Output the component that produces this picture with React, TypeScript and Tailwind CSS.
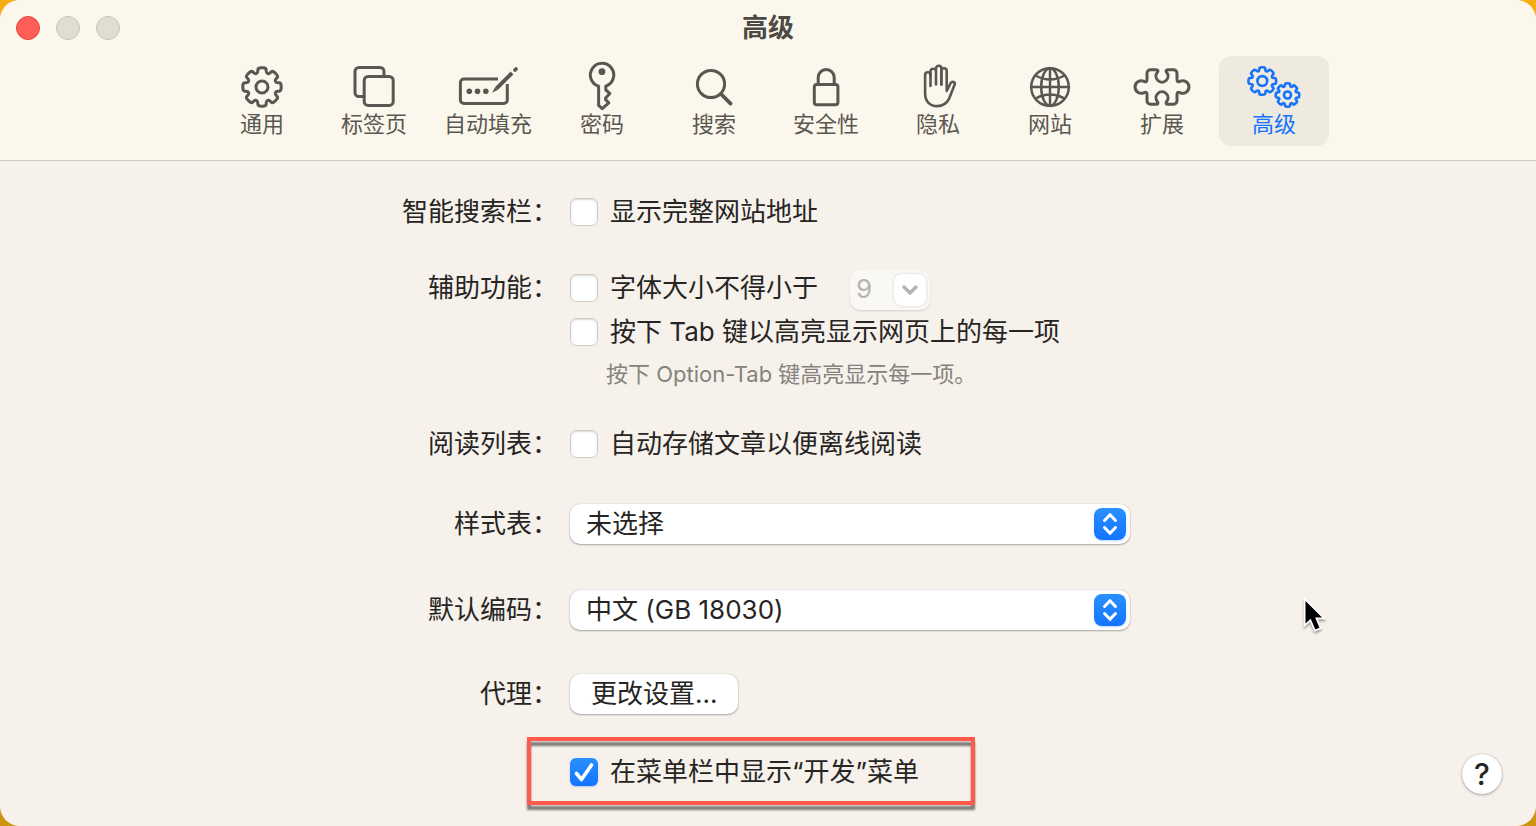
import React, { useState } from "react";
import { ChevronDown } from "lucide-react";

// Closed outline of a cog with eight rounded teeth
function gearPath(cx: number, cy: number, r: number) {
    const pts: number[][] = [];
    for (let i = 0; i < 8; i++) {
        const a = i * 45 - 90;
        [[-17, 0.75], [-12, 1], [12, 1], [17, 0.75]].forEach(([d, k]) => {
            const t = ((a + d) * Math.PI) / 180;
            pts.push([cx + Math.cos(t) * r * k, cy + Math.sin(t) * r * k]);
        });
    }
    const mix = (p: number[], q: number[], k: number) =>
        `${(p[0] + (q[0] - p[0]) * k).toFixed(2)} ${(p[1] + (q[1] - p[1]) * k).toFixed(2)}`;
    return (
        pts
            .map((p, i) => {
                const prev = pts[(i + pts.length - 1) % pts.length];
                const next = pts[(i + 1) % pts.length];
                return `${i === 0 ? "M" : "L"}${mix(p, prev, 0.4)} Q${mix(p, p, 0)} ${mix(p, next, 0.4)}`;
            })
            .join(" ") + "Z"
    );
}

const tabs: { label: string; icon: React.ReactNode }[] = [
    {
        label: "通用",
        icon: (
            <>
                <path d={gearPath(30, 25, 19.6)} />
                <circle cx="30" cy="25" r="6" />
            </>
        ),
    },
    {
        label: "标签页",
        icon: (
            <>
                <path d="M20 34.5H15a4 4 0 0 1-4-4V9.5a4 4 0 0 1 4-4h21a4 4 0 0 1 4 4V14" />
                <rect x="20.2" y="14.4" width="29" height="29" rx="4" />
            </>
        ),
    },
    {
        label: "自动填充",
        icon: (
            <>
                <path d="M40 17H6a3.6 3.6 0 0 0-3.6 3.6V38A3.6 3.6 0 0 0 6 41.6h39.7a3.6 3.6 0 0 0 3.6-3.6V22" strokeLinecap="butt" />
                <path d="M38.6 26.4L54 11" strokeWidth="4" strokeLinecap="butt" />
                <path d="M57 8l1-1" strokeWidth="3.8" />
                <g fill="currentColor" stroke="none">
                    <path d="M34.2 30.8l3-5.8 2.8 2.8z" />
                    <circle cx="11.3" cy="29.2" r="2.8" />
                    <circle cx="19.5" cy="29.2" r="2.8" />
                    <circle cx="27.8" cy="29.2" r="2.8" />
                </g>
            </>
        ),
    },
    {
        label: "密码",
        icon: (
            <>
                <path d="M26.6 24.2a11.7 11.7 0 1 1 7.2-.1V28l4 3.4-4.2 4.6v1.6l3.2 3.2-6.6 5.9-3.6-3.3z" />
                <circle cx="30" cy="9.7" r="3.4" fill="currentColor" stroke="none" />
            </>
        ),
    },
    {
        label: "搜索",
        icon: (
            <>
                <circle cx="27" cy="22" r="13.6" />
                <path d="M37 32l9.6 9.6" strokeWidth="3.8" />
            </>
        ),
    },
    {
        label: "安全性",
        icon: (
            <>
                <rect x="18.3" y="22.6" width="23.6" height="20.2" rx="2.5" />
                <path d="M22.2 22.5V15.5a8 8 0 0 1 16 0v7" />
            </>
        ),
    },
    {
        label: "隐私",
        icon: (
            <g strokeWidth="2.6">
                <path d="M22.5 24V13a2.7 2.7 0 0 0-5.4 0v18.5c0 8 5 12.6 12 12.6 6 0 9.8-3 12-7.5 1.8-4 3.6-9.3 5.6-14 .9-2.6-2.4-3.7-4-1.6l-4 7.8V9a2.7 2.7 0 0 0-5.4 0v13.5" />
                <path d="M22.5 14V9a2.8 2.8 0 0 1 5.5 0v13.5M28 9V6.5a2.7 2.7 0 0 1 5.4 0v16" />
            </g>
        ),
    },
    {
        label: "网站",
        icon: (
            <g strokeWidth="2.5">
                <circle cx="30" cy="25" r="18.8" />
                <ellipse cx="30" cy="25" rx="8.8" ry="18.8" />
                <path d="M30 6v38M11 25h38M15.5 13.5q14.5 8 29 0M15.5 36.5q14.5-8 29 0" />
            </g>
        ),
    },
    {
        label: "扩展",
        icon: (
            <path d="M18.5 7.7H24c2 0 2.5 1 1.4 2.6a6 6 0 1 0 9.2 0C33.5 8.7 34 7.7 36 7.7h5.5a3.5 3.5 0 0 1 3.5 3.5V17.5c0 2.3 1.4 3 3.2 1.7a6.3 6.3 0 1 1 0 11.6C46.4 29.5 45 30.2 45 32.5v6.3a3.5 3.5 0 0 1-3.5 3.5H36c-2 0-2.5-1-1.4-2.6a6 6 0 1 0-9.2 0c1.1 1.6.6 2.6-1.4 2.6h-5.5a3.5 3.5 0 0 1-3.5-3.5V32.5c0-2.3-1.4-3-3.2-1.7a6.3 6.3 0 1 1 0-11.6C13.6 20.5 15 19.8 15 17.5v-6.3a3.5 3.5 0 0 1 3.5-3.5z" />
        ),
    },
    {
        label: "高级",
        icon: (
            <g strokeWidth="2.6">
                <path d={gearPath(18.3, 19, 14.1)} />
                <circle cx="18.3" cy="19" r="4.9" />
                <path d={gearPath(43.5, 33, 12)} />
                <circle cx="43.5" cy="33" r="3.5" />
            </g>
        ),
    },
];

function Checkbox({ label, defaultChecked = false }: { label: string; defaultChecked?: boolean }) {
    return (
        <label className="flex h-10 w-fit items-center gap-3">
            <span className="grid place-items-center">
                <input
                    type="checkbox"
                    defaultChecked={defaultChecked}
                    className="peer col-start-1 row-start-1 size-7 appearance-none rounded-md border border-[#cfccc8] bg-white shadow-[inset_0_1px_2px_rgba(0,0,0,0.16)] checked:border-transparent checked:bg-linear-to-b checked:from-[#2a90ff] checked:to-[#1274ff] checked:bg-origin-border checked:shadow-[0_1px_2px_rgba(20,110,255,0.3)]"
                />
                <svg viewBox="0 0 28 28" className="pointer-events-none invisible col-start-1 row-start-1 size-7 peer-checked:visible" fill="none" stroke="white" strokeWidth="3.6" strokeLinecap="round" strokeLinejoin="round">
                    <path d="M6.5 15.5l5 6L21.500 7" />
                </svg>
            </span>
            <span>{label}</span>
        </label>
    );
}

function Select({ id, value }: { id: string; value: string }) {
    return (
        <div className="grid w-[560px] items-center">
            <select id={id} className="col-start-1 row-start-1 h-10 w-full appearance-none rounded-[10px] bg-white pr-12 pl-4 shadow-[0_0_1px_rgba(0,0,0,0.3),0_1px_2px_rgba(0,0,0,0.3)]">
                <option>{value}</option>
            </select>
            <span className="pointer-events-none col-start-1 row-start-1 mr-1 size-8 justify-self-end rounded-lg bg-linear-to-b from-[#2a90ff] to-[#1274ff] shadow-[0_1px_2px_rgba(20,110,255,0.3)]">
                <svg viewBox="0 0 32 32" className="size-8" fill="none" stroke="white" strokeWidth="3" strokeLinecap="round" strokeLinejoin="round">
                    <path d="M10.5 12.5L16 6.7l5.5 5.8M10.5 19.5l5.5 5.8 5.5-5.8" />
                </svg>
            </span>
        </div>
    );
}

export default function App() {
    const [active, setActive] = useState("高级");
    return (
        <div className="min-h-screen bg-linear-to-b from-[#f5ae13] to-[#cd9410] font-['Inter','Noto_Sans_CJK_SC',sans-serif]">
            <div className="relative flex min-h-screen flex-col overflow-hidden rounded-[20px] bg-[#f6f1eb]">
                {/* Title bar and toolbar */}
                <header className="border-b border-[#cdcac3] bg-[#fbf7ec] pb-[14px]">
                    <div className="grid h-14 grid-cols-[1fr_auto_1fr] items-center px-4">
                        <div className="flex gap-4">
                            <button aria-label="关闭" className="size-6 rounded-full border border-[#e2463f] bg-[#ff5f57]" />
                            <button aria-label="最小化" className="size-6 rounded-full border border-[#c5c2b8] bg-[#e1ddd2]" />
                            <button aria-label="缩放" className="size-6 rounded-full border border-[#c5c2b8] bg-[#e1ddd2]" />
                        </div>
                        <h1 className="text-[26px] leading-8 font-bold text-[#4b4944]">高级</h1>
                    </div>
                    <nav className="flex justify-center gap-0.5">
                        {tabs.map((tab) => (
                            <button
                                key={tab.label}
                                onClick={() => setActive(tab.label)}
                                className={`flex min-w-[110px] flex-col items-center rounded-xl px-[13px] pt-1.5 pb-2 ${active === tab.label ? "bg-[#eeeadf] text-[#1673fb]" : "text-[#595751]"}`}
                            >
                                <svg viewBox="0 0 60 48" className="h-12 w-[60px] overflow-visible" fill="none" stroke="currentColor" strokeWidth="3" strokeLinecap="round" strokeLinejoin="round">
                                    {tab.icon}
                                </svg>
                                <span className="text-[22px] leading-7">{tab.label}</span>
                            </button>
                        ))}
                    </nav>
                </header>

                {/* Advanced settings */}
                <main className="grid flex-1 grid-cols-[1fr_736px_1fr] pt-[31px] pb-8">
                    <form className="col-start-2 grid grid-cols-[158px_1fr] content-start gap-x-3 text-[26px] leading-10 text-[#262523]">
                        <div className="text-right">智能搜索栏：</div>
                        <Checkbox label="显示完整网站地址" />

                        <div className="mt-9 text-right">辅助功能：</div>
                        <div className="mt-9">
                            <div className="flex items-start gap-8">
                                <Checkbox label="字体大小不得小于" />
                                <div className="mt-0.5 flex h-10 w-20 items-center rounded-[10px] bg-[#faf8f5] pr-1 pl-1.5 shadow-[0_1px_2px_rgba(0,0,0,0.14)]">
                                    <input aria-label="最小字体大小" disabled defaultValue="9" className="h-9 w-0 flex-1 pb-0.5 text-[#b6b4b0]" />
                                    <button type="button" aria-label="选择字体大小" disabled className="grid size-8 place-items-center rounded-lg bg-white shadow-[0_0_3px_rgba(0,0,0,0.16)]">
                                        <ChevronDown className="size-6 text-[#b6b4b0]" strokeWidth={3.5} />
                                    </button>
                                </div>
                            </div>
                            <div className="mt-0.5">
                                <Checkbox label="按下 Tab 键以高亮显示网页上的每一项" />
                            </div>
                            <p className="mt-0.5 pl-9 text-[22px] leading-10 text-[#85827e]">按下 Option-Tab 键高亮显示每一项。</p>
                        </div>

                        <div className="mt-[30px] text-right">阅读列表：</div>
                        <div className="mt-[30px]">
                            <Checkbox label="自动存储文章以便离线阅读" />
                        </div>

                        <label htmlFor="stylesheet" className="mt-10 text-right">样式表：</label>
                        <div className="mt-10">
                            <Select id="stylesheet" value="未选择" />
                        </div>

                        <label htmlFor="encoding" className="mt-[46px] text-right">默认编码：</label>
                        <div className="mt-[46px]">
                            <Select id="encoding" value="中文 (GB 18030)" />
                        </div>

                        <div className="mt-11 text-right">代理：</div>
                        <div className="mt-11">
                            <button type="button" className="h-10 rounded-[10px] bg-white px-[21px] shadow-[0_0_1px_rgba(0,0,0,0.3),0_1px_2px_rgba(0,0,0,0.3)]">更改设置...</button>
                        </div>

                        <div className="relative col-start-2 mt-[38px] w-fit">
                            <Checkbox label="在菜单栏中显示“开发”菜单" defaultChecked />
                            <div className="pointer-events-none absolute -top-[15px] -right-14 -bottom-[13px] -left-[43px] border-4 border-[#ff5a4c] drop-shadow-[0_5px_1px_rgba(0,0,0,0.5)]" />
                        </div>
                    </form>
                    <button aria-label="帮助" className="mr-[34px] size-10 self-end justify-self-end rounded-full bg-white text-[30px] leading-10 font-medium text-[#262523] shadow-[0_0_1px_rgba(0,0,0,0.3),0_1px_3px_rgba(0,0,0,0.3)]">?</button>
                </main>

                {/* Mouse pointer */}
                <svg viewBox="0 0 24 38" className="pointer-events-none absolute top-[596px] left-[1303px] h-[38px] w-6 overflow-visible drop-shadow-[0_2px_1px_rgba(0,0,0,0.35)]">
                    <path d="M2.5 5v22.5l5.2-4.8 4.6 10.8 4.2-1.8-4.4-10.3h7z" fill="black" stroke="white" strokeWidth="3.6" paintOrder="stroke" />
                </svg>
            </div>
        </div>
    );
}
